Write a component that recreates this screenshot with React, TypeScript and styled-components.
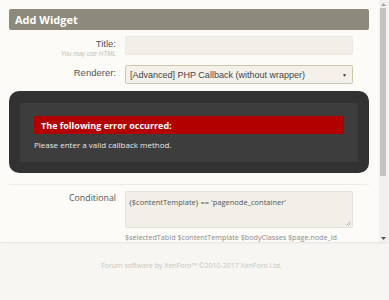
import React from "react";
import styled, { createGlobalStyle } from "styled-components";

const Global = createGlobalStyle`
  html, body { margin: 0; padding: 0; }
  body {
    background: #f7f6f2;
    font-family: "Liberation Sans", Arial, sans-serif;
    width: 389px;
    height: 300px;
    overflow: hidden;
  }
`;

const Page = styled.div`
  display: flex;
  flex-direction: column;
  width: 389px;
  height: 300px;
`;

const Window = styled.div`
  display: flex;
  height: 242px;
  width: 387px;
  background: #fcfbf8;
  box-shadow: 0 1px 2px rgba(0, 0, 0, 0.08);
`;

const Content = styled.div`
  flex: 1;
  overflow: hidden;
  padding: 9px 10px 0 9px;
  display: flex;
  flex-direction: column;
`;

const Header = styled.div`
  height: 22px;
  background: #8d8a7b;
  border-radius: 2px;
  color: #fff;
  font-family: "Open Sans", "Noto Sans", sans-serif;
  font-weight: 700;
  font-size: 11px;
  display: flex;
  align-items: center;
  padding-left: 6px;
`;

const Row = styled.div<{ $mt: number }>`
  display: grid;
  grid-template-columns: 107px 228px;
  column-gap: 9px;
  margin-top: ${(p) => p.$mt}px;
`;

const Label = styled.div<{ $font?: string; $size?: number }>`
  text-align: right;
  font-family: ${(p) => p.$font || '"Liberation Sans", Arial, sans-serif'};
  font-size: ${(p) => p.$size || 9.5}px;
  color: #555;
  padding-top: 2px;
  line-height: 11px;
`;

const Hint = styled.div`
  font-size: 6.3px;
  font-style: italic;
  color: #c2c0b6;
  line-height: 7px;
  margin-top: 1px;
`;

const TextInput = styled.div`
  height: 19px;
  background: #f1efe8;
  border: 1px solid #ebe9e1;
  border-radius: 2px;
  box-sizing: border-box;
`;

const Select = styled.div`
  height: 19px;
  box-sizing: border-box;
  background: #f3f1ea;
  border: 1px solid #cbc8ae;
  border-radius: 2px;
  display: flex;
  align-items: center;
  justify-content: space-between;
  padding: 0 5px 0 4px;
  font-size: 9px;
  color: #444;
`;

const Arrow = styled.span`
  font-size: 5px;
  color: #333;
`;

const ErrorOverlay = styled.div`
  margin-top: 7px;
  height: 84px;
  background: #323232;
  border-radius: 10px;
  padding: 12px 11px 11px 11px;
  box-sizing: border-box;
  display: flex;
`;

const ErrorInner = styled.div`
  flex: 1;
  background: #3d3d3d;
  padding: 13px 14px 0 14px;
  display: flex;
  flex-direction: column;
`;

const ErrorBar = styled.div`
  height: 18px;
  background: #b20000;
  border-radius: 2px;
  color: #fff;
  font-family: "Open Sans", "Noto Sans", sans-serif;
  font-weight: 700;
  font-size: 9px;
  display: flex;
  align-items: center;
  padding-left: 7px;
`;

const ErrorText = styled.div`
  margin-top: 5px;
  color: #e8e8e8;
  font-family: "Open Sans", "Noto Sans", sans-serif;
  font-size: 8px;
`;

const Divider = styled.div`
  margin-top: 11px;
  height: 1px;
  background: #ecebe5;
`;

const TextArea = styled.div`
  position: relative;
  height: 37px;
  box-sizing: border-box;
  background: #f1efe8;
  border: 1px solid #e4e2d9;
  border-radius: 2px;
  padding: 5px 3px;
  font-family: "Open Sans", "Noto Sans", sans-serif;
  font-size: 7.5px;
  color: #555;
`;

const Grip = styled.svg`
  position: absolute;
  right: 1px;
  bottom: 1px;
`;

const Vars = styled.div`
  margin-top: 4px;
  font-family: "Open Sans", "Noto Sans", sans-serif;
  font-size: 7.2px;
  color: #8a8a8a;
  white-space: nowrap;
`;

const ScrollBar = styled.div`
  width: 8px;
  background: #f1f1f1;
  display: flex;
  flex-direction: column;
  align-items: center;
`;

const ScrollBtn = styled.div`
  height: 8px;
  width: 8px;
  display: flex;
  align-items: center;
  justify-content: center;
`;

const Thumb = styled.div`
  width: 6px;
  height: 168px;
  background: #c3c3c3;
`;

const Track = styled.div`
  flex: 1;
`;

const Footer = styled.div`
  margin-top: 19px;
  text-align: center;
  font-family: "Open Sans", "Noto Sans", sans-serif;
  font-size: 7px;
  color: #c7c5bd;
  padding-right: 6px;
`;

function Tri({ up }: { up?: boolean }) {
  return (
    <svg width="5" height="3" viewBox="0 0 5 3">
      <polygon points={up ? "0,3 5,3 2.5,0" : "0,0 5,0 2.5,3"} fill={up ? "#a3a3a3" : "#505050"} />
    </svg>
  );
}

export default function App() {
  return (
    <>
      <Global />
      <Page>
        <Window>
          <Content>
            <Header>Add Widget</Header>
            <Row $mt={6}>
              <Label>
                Title:
                <Hint>You may use HTML</Hint>
              </Label>
              <TextInput />
            </Row>
            <Row $mt={8}>
              <Label>Renderer:</Label>
              <Select>
                <span>[Advanced] PHP Callback (without wrapper)</span>
                <Arrow>▼</Arrow>
              </Select>
            </Row>
            <ErrorOverlay>
              <ErrorInner>
                <ErrorBar>The following error occurred:</ErrorBar>
                <ErrorText>Please enter a valid callback method.</ErrorText>
              </ErrorInner>
            </ErrorOverlay>
            <Divider />
            <Row $mt={6}>
              <Label $font={'"Open Sans", "Noto Sans", sans-serif'} $size={8.8}>
                Conditional
              </Label>
              <div>
                <TextArea>
                  {"{$contentTemplate} == 'pagenode_container'"}
                  <Grip width="5" height="5" viewBox="0 0 5 5">
                    <path d="M0.5 4.5 L4.5 0.5 M2.5 4.5 L4.5 2.5" stroke="#999" strokeWidth="0.7" />
                  </Grip>
                </TextArea>
                <Vars>$selectedTabId $contentTemplate $bodyClasses $page.node_id</Vars>
              </div>
            </Row>
          </Content>
          <ScrollBar>
            <ScrollBtn>
              <Tri up />
            </ScrollBtn>
            <Thumb />
            <Track />
            <ScrollBtn>
              <Tri />
            </ScrollBtn>
          </ScrollBar>
        </Window>
        <Footer>Forum software by XenForo™ ©2010-2017 XenForo Ltd.</Footer>
      </Page>
    </>
  );
}
